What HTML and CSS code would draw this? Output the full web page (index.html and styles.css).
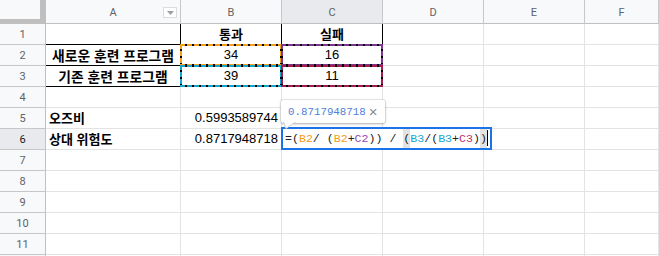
FILE: index.html
```html
<!DOCTYPE html>
<html lang="ko">
<head>
<meta charset="utf-8">
<title>Sheet</title>
<link rel="stylesheet" href="styles.css">
</head>
<body>
<div class="sheet">
  <div class="corner"></div>
  <div class="ch ch-a">A<span class="filter"><svg width="7" height="4" viewBox="0 0 7 4"><polygon points="0,0 7,0 3.5,4" fill="#9aa0a6"/></svg></span></div>
  <div class="ch">B</div>
  <div class="ch ch-sel">C</div>
  <div class="ch">D</div>
  <div class="ch">E</div>
  <div class="ch">F</div>

  <div class="rh">1</div>
  <div class="cell kr kb"></div>
  <div class="cell kr kb center bold">통과</div>
  <div class="cell kr kb center bold">실패</div>
  <div class="cell"></div><div class="cell"></div><div class="cell"></div>

  <div class="rh">2</div>
  <div class="cell kr kb center bold big">새로운 훈련 프로그램</div>
  <div class="cell kr kb center">34<span class="range r-orange"></span></div>
  <div class="cell kr kb center">16<span class="range r-purple"></span></div>
  <div class="cell"></div><div class="cell"></div><div class="cell"></div>

  <div class="rh">3</div>
  <div class="cell kr kb center bold big">기존 훈련 프로그램</div>
  <div class="cell kr kb center">39<span class="range r-cyan"></span></div>
  <div class="cell kr kb center">11<span class="range r-crimson"></span></div>
  <div class="cell"></div><div class="cell"></div><div class="cell"></div>

  <div class="rh">4</div>
  <div class="cell"></div><div class="cell"></div><div class="cell"></div>
  <div class="cell"></div><div class="cell"></div><div class="cell"></div>

  <div class="rh">5</div>
  <div class="cell bold">오즈비</div>
  <div class="cell right">0.5993589744</div>
  <div class="cell"></div><div class="cell"></div><div class="cell"></div><div class="cell"></div>

  <div class="rh rh-sel">6</div>
  <div class="cell bold">상대 위험도</div>
  <div class="cell right">0.8717948718</div>
  <div class="cell">
    <div class="tip">
      <span class="tip-val">0.8717948718</span><span class="tip-x">×</span>
      <svg class="tail" width="13" height="7" viewBox="0 0 13 7"><polygon points="0.5,0 12.5,0 3,6.5" fill="#fff"/><polyline points="0.5,0 3,6.5 12.5,0" fill="none" stroke="#cfcfcf" stroke-width="1"/></svg>
    </div>
    <div class="editor"><span>=(</span><span class="f-orange">B2</span><span>/ (</span><span class="f-orange">B2</span><span>+</span><span class="f-purple">C2</span><span>)) / </span><span class="hl">(</span><span class="f-cyan">B3</span><span>/(</span><span class="f-cyan">B3</span><span>+</span><span class="f-crimson">C3</span><span>)</span><span class="hl">)</span><span class="caret"></span></div>
  </div>
  <div class="cell"></div><div class="cell"></div><div class="cell"></div>

  <div class="rh">7</div>
  <div class="cell"></div><div class="cell"></div><div class="cell"></div>
  <div class="cell"></div><div class="cell"></div><div class="cell"></div>

  <div class="rh">8</div>
  <div class="cell"></div><div class="cell"></div><div class="cell"></div>
  <div class="cell"></div><div class="cell"></div><div class="cell"></div>

  <div class="rh">9</div>
  <div class="cell"></div><div class="cell"></div><div class="cell"></div>
  <div class="cell"></div><div class="cell"></div><div class="cell"></div>

  <div class="rh">10</div>
  <div class="cell"></div><div class="cell"></div><div class="cell"></div>
  <div class="cell"></div><div class="cell"></div><div class="cell"></div>

  <div class="rh">11</div>
  <div class="cell"></div><div class="cell"></div><div class="cell"></div>
  <div class="cell"></div><div class="cell"></div><div class="cell"></div>

  <div class="rh"></div>
  <div class="cell"></div><div class="cell"></div><div class="cell"></div>
  <div class="cell"></div><div class="cell"></div><div class="cell"></div>
</div>
</body>
</html>
```

FILE: styles.css
```css
html, body {
  margin: 0;
  padding: 0;
  background: #fff;
}
body {
  width: 659px;
  height: 256px;
  overflow: hidden;
}
.sheet {
  display: grid;
  grid-template-columns: 46px 135px 101px 101px 101px 101px 74px;
  grid-template-rows: 24px repeat(12, 21px);
  font-family: "Liberation Sans", "Noto Sans CJK KR", Arial, sans-serif;
  font-size: 13px;
  color: #000;
}
.corner {
  box-sizing: border-box;
  background: #f8f9fa;
  border-right: 6px solid #bfbfbf;
  border-bottom: 5px solid #bfbfbf;
}
.ch {
  box-sizing: border-box;
  position: relative;
  display: flex;
  align-items: center;
  justify-content: center;
  background: #f8f9fa;
  border-right: 1px solid #c7c7c7;
  border-bottom: 1px solid #c0c0c0;
  font-family: "Roboto", "Liberation Sans", sans-serif;
  font-size: 11px;
  color: #5f6368;
  padding-top: 1px;
}
.ch-sel {
  background: #e8eaed;
}
.filter {
  position: absolute;
  right: 3px;
  top: 7px;
  width: 12px;
  height: 9px;
  border: 1px solid #dadce0;
  background: #fff;
  display: flex;
  align-items: center;
  justify-content: center;
}
.rh {
  box-sizing: border-box;
  display: flex;
  align-items: center;
  justify-content: center;
  background: #f8f9fa;
  border-right: 1px solid #c0c0c0;
  border-bottom: 1px solid #c7c7c7;
  font-family: "Roboto", "Liberation Sans", sans-serif;
  font-size: 11px;
  color: #5f6368;
}
.rh-sel {
  background: #e8eaed;
  color: #202124;
}
.cell {
  box-sizing: border-box;
  position: relative;
  border-right: 1px solid #e2e3e3;
  border-bottom: 1px solid #e2e3e3;
  line-height: 20px;
  padding: 0 3px;
  white-space: nowrap;
}
.kr { border-right-color: #000; }
.kb { border-bottom-color: #000; }
.center { text-align: center; }
.right { text-align: right; }
.bold {
  font-weight: 700;
  font-family: "Noto Sans CJK KR", "Liberation Sans", sans-serif;
}
.big {
  font-size: 13.8px;
  padding: 0;
}
.range {
  position: absolute;
  left: -1px;
  top: -1px;
  width: 102px;
  height: 22px;
  pointer-events: none;
  --c: #f5a018;
  background:
    repeating-linear-gradient(90deg, var(--c) 0 5px, #000 5px 7px) left top / 100% 2px no-repeat,
    repeating-linear-gradient(90deg, var(--c) 0 5px, #000 5px 7px) left bottom / 100% 2px no-repeat,
    repeating-linear-gradient(180deg, var(--c) 0 5px, #000 5px 7px) left top / 2px 100% no-repeat,
    repeating-linear-gradient(180deg, var(--c) 0 5px, #000 5px 7px) right top / 2px 100% no-repeat;
}
.r-orange { --c: #f5a018; }
.r-purple { --c: #7e3594; }
.r-cyan { --c: #12a8cd; }
.r-crimson { --c: #a51d50; }

.editor {
  position: absolute;
  left: -1px;
  top: -2px;
  width: 211px;
  height: 23px;
  box-sizing: border-box;
  border: 2px solid #1a73e8;
  background: #fff;
  padding-left: 2px;
  font-family: "Liberation Mono", "DejaVu Sans Mono", monospace;
  font-size: 11.6px;
  line-height: 19px;
  color: #202124;
  display: flex;
  align-items: stretch;
  white-space: pre;
  z-index: 2;
}
.editor span {
  display: block;
}
.f-orange { color: #f39c12; }
.f-purple { color: #9c46b4; }
.f-cyan { color: #16a6cf; }
.f-crimson { color: #c1306a; }
.hl { background: #e3e3e3; }
.editor .caret {
  width: 1px;
  margin: 1px 0 2px 0;
  background: #000;
}
.tip {
  position: absolute;
  left: -1px;
  top: -29px;
  width: 104px;
  height: 23px;
  box-sizing: border-box;
  background: #fff;
  border-radius: 2px;
  box-shadow: 0 0 0 1px rgba(0,0,0,0.08), 0 1px 3px rgba(0,0,0,0.25);
  display: flex;
  align-items: center;
  padding-left: 7px;
  z-index: 3;
}
.tip-val {
  font-family: "Liberation Mono", "DejaVu Sans Mono", monospace;
  font-size: 10.8px;
  color: #4f80d8;
  line-height: 14px;
}
.tip-x {
  margin-left: 3px;
  font-family: "Liberation Sans", sans-serif;
  font-size: 15px;
  line-height: 14px;
  color: #8a8a8a;
}
.tail {
  position: absolute;
  left: 2px;
  top: 22px;
}
```
